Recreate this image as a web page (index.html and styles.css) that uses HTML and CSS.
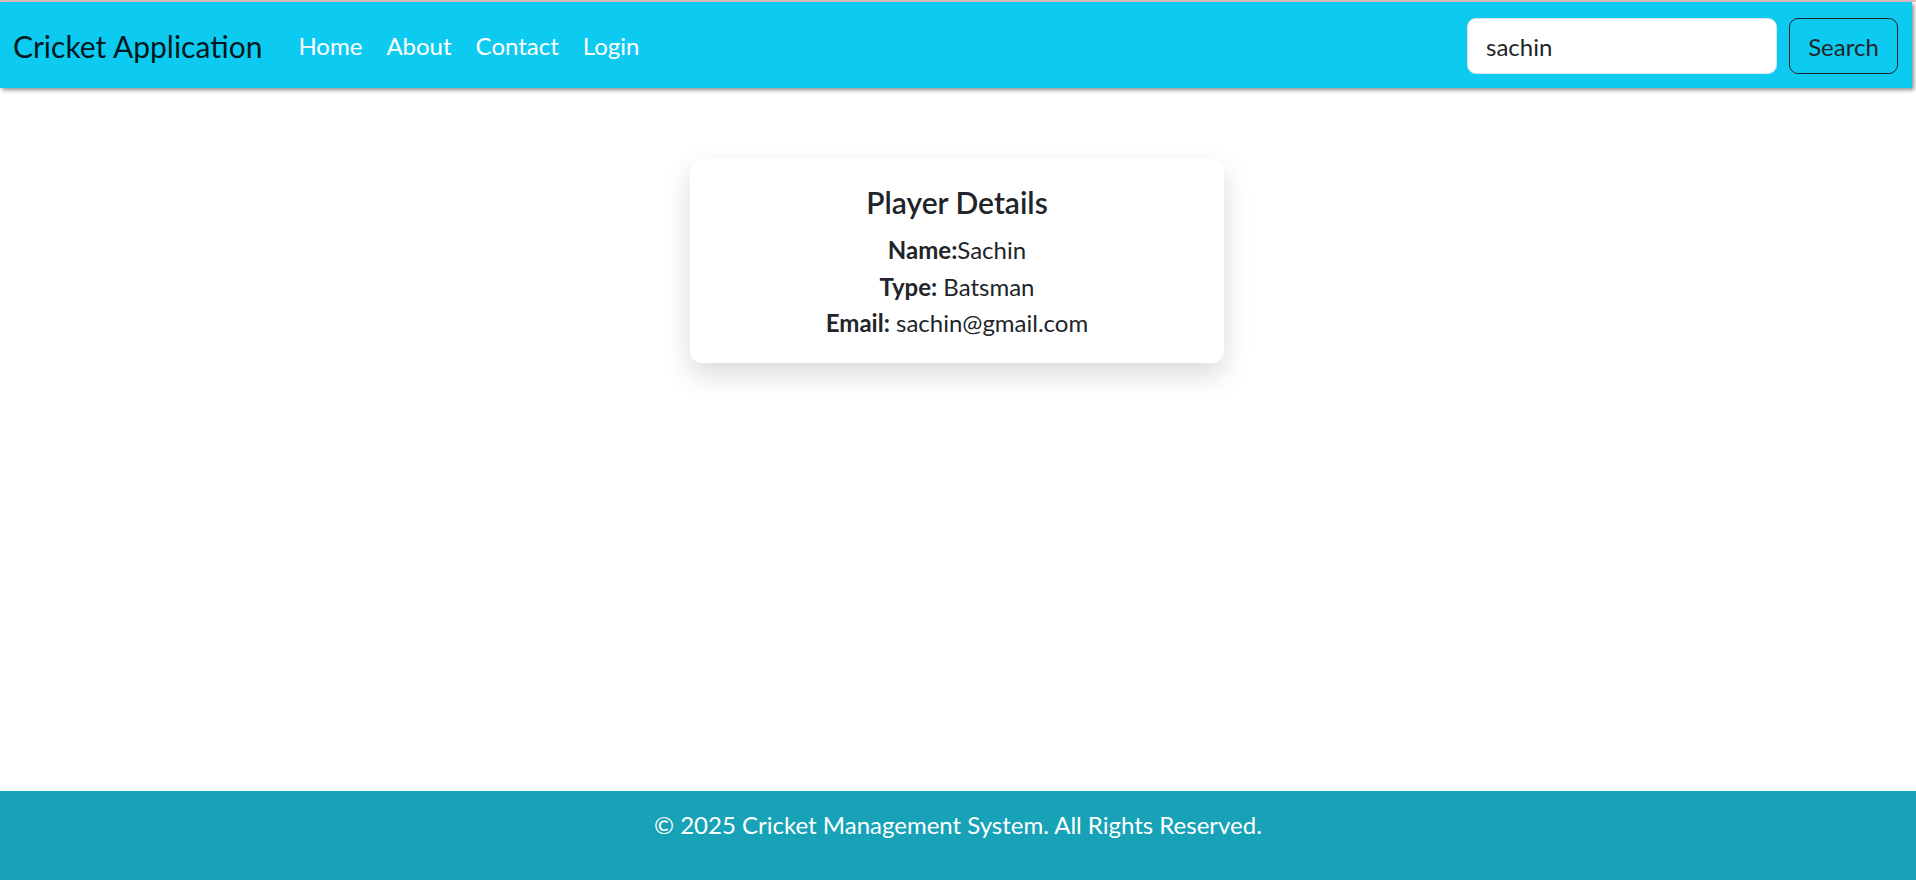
FILE: index.html
```html
<!DOCTYPE html>
<html lang="en">
<head>
<meta charset="utf-8">
<title>Cricket Application</title>
<link rel="stylesheet" href="styles.css">
</head>
<body>
<div class="topline"></div>
<nav class="navbar">
  <div class="nav-left">
    <a class="brand" href="#">Cricket Application</a>
    <ul class="nav-links">
      <li><a href="#">Home</a></li>
      <li><a href="#">About</a></li>
      <li><a href="#">Contact</a></li>
      <li><a href="#">Login</a></li>
    </ul>
  </div>
  <form class="search">
    <input class="search-input" type="text" value="sachin">
    <button class="search-btn" type="button">Search</button>
  </form>
</nav>
<main class="main">
  <div class="card">
    <h5 class="card-title">Player Details</h5>
    <p class="line"><strong>Name:</strong>Sachin</p>
    <p class="line"><strong>Type:</strong> Batsman</p>
    <p class="line"><strong>Email:</strong> sachin@gmail.com</p>
  </div>
</main>
<footer class="footer">
  <p class="footer-text">© 2025 Cricket Management System. All Rights Reserved.</p>
</footer>
</body>
</html>
```
FILE: styles.css
```css
* { box-sizing: border-box; }
html, body { margin: 0; padding: 0; }
body {
  font-family: Lato, "Liberation Sans", sans-serif;
  color: #212529;
  background: #fff;
  min-height: 100vh;
  display: flex;
  flex-direction: column;
}
.topline {
  height: 2px;
  background: #dcc0c4;
}
.navbar {
  height: 86px;
  width: calc(100% - 4px);
  background: #0dcaf0;
  box-shadow: 2px 2px 4px rgba(0, 0, 0, 0.45);
  display: flex;
  align-items: center;
  justify-content: space-between;
  padding: 2px 14px 0 13px;
  position: relative;
  z-index: 1;
}
.nav-left {
  display: flex;
  align-items: center;
}
.brand {
  font-size: 30px;
  line-height: 45px;
  color: rgba(0, 0, 0, 0.9);
  text-decoration: none;
  margin-right: 24px;
}
.nav-links {
  list-style: none;
  margin: 0;
  padding: 0;
  display: flex;
}
.nav-links a {
  display: block;
  font-size: 24px;
  line-height: 36px;
  padding: 12px;
  color: #fff;
  text-decoration: none;
}
.search {
  display: flex;
  align-items: center;
  gap: 12px;
}
.search-input {
  width: 310px;
  height: 56px;
  border: 1px solid #dee2e6;
  border-radius: 9px;
  padding: 0 18px;
  font-family: inherit;
  font-size: 24px;
  color: #212529;
  background: #fff;
  outline: none;
}
.search-btn {
  width: 109px;
  height: 56px;
  border: 1px solid #212529;
  border-radius: 9px;
  background: transparent;
  font-family: inherit;
  font-size: 24px;
  color: #212529;
  padding: 0;
}
.main {
  flex: 1;
  padding-top: 71px;
}
.card {
  width: 534px;
  margin: 0 auto;
  position: relative;
  left: -1px;
  background: #fff;
  border-radius: 12px;
  box-shadow: 0 12px 28px rgba(0, 0, 0, 0.15);
  padding: 22px 22px 21px;
  text-align: center;
}
.card-title {
  margin: 0 0 8px;
  font-size: 30px;
  line-height: 43px;
  font-weight: 600;
}
.line {
  margin: 0;
  font-size: 24px;
  line-height: 36.5px;
}
.line strong { font-weight: 700; }
.footer {
  height: 89px;
  background: #17a2b8;
  padding-top: 16px;
  text-align: center;
}
.footer-text {
  margin: 0;
  color: #fff;
  font-size: 24px;
  line-height: 36px;
}
```
